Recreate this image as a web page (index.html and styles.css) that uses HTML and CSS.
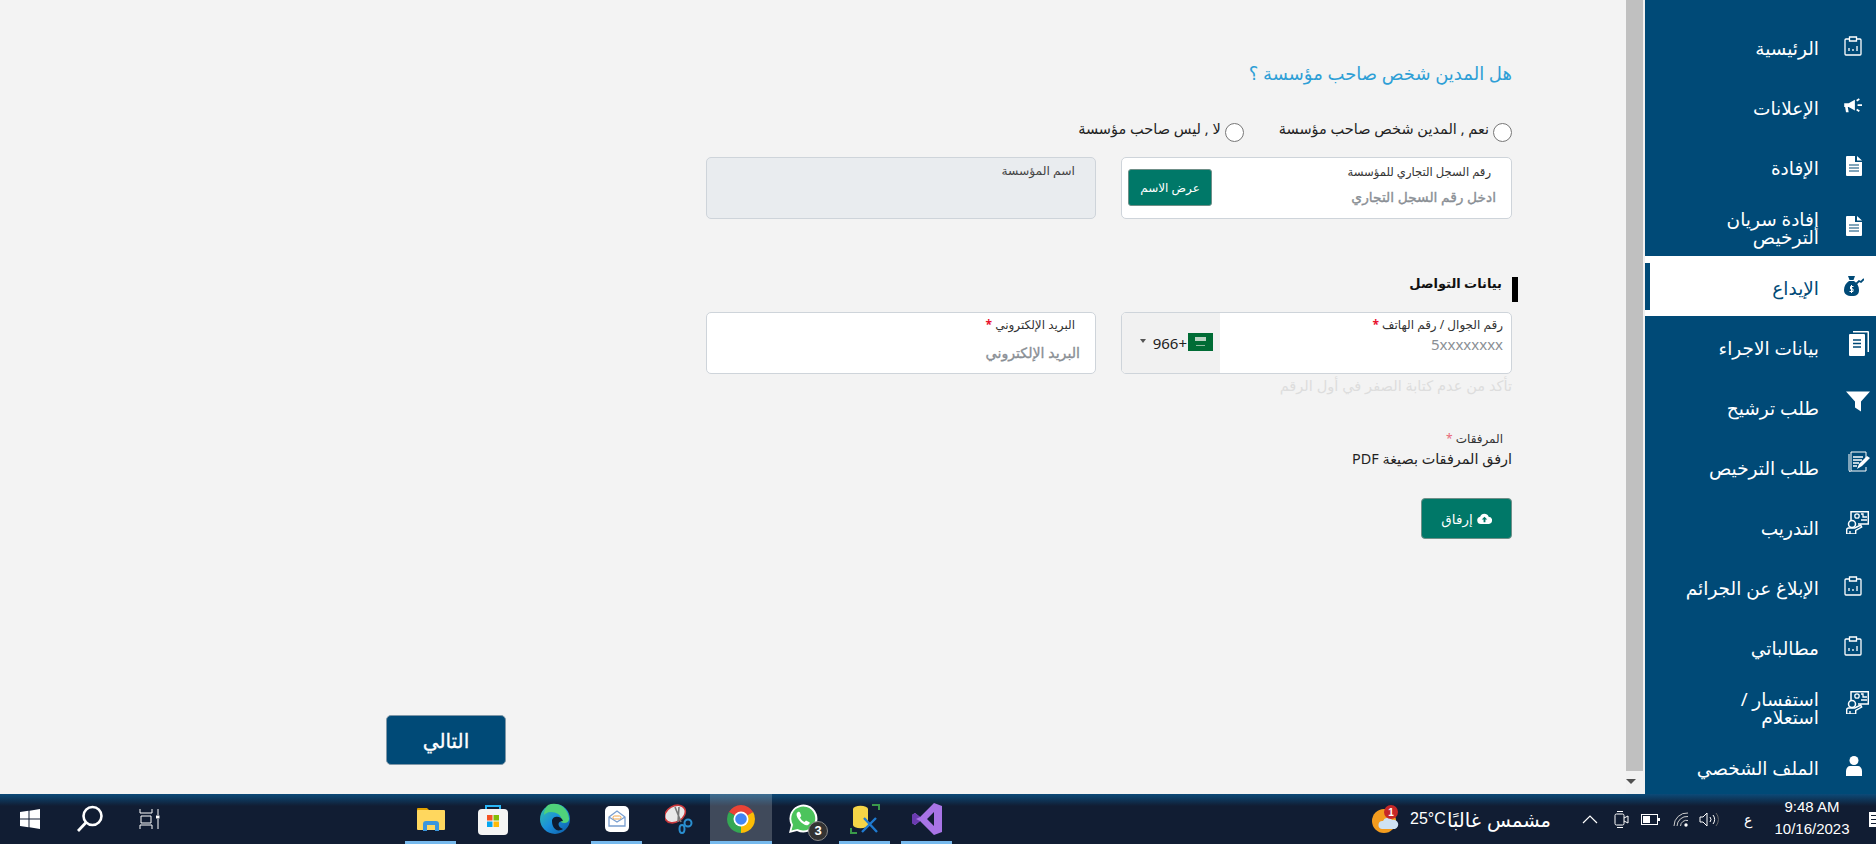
FILE: index.html
```html
<!DOCTYPE html>
<html lang="ar" dir="rtl">
<head>
<meta charset="utf-8">
<title>الإيداع</title>
<link rel="stylesheet" href="styles.css">
</head>
<body>
<svg class="defs" width="0" height="0" aria-hidden="true">
  <symbol id="i-clip" viewBox="0 0 18 20"><path d="M5.5 3H2a1 1 0 0 0-1 1v14a1 1 0 0 0 1 1h14a1 1 0 0 0 1-1V4a1 1 0 0 0-1-1h-3.500M5.500 1h7v4h-7z" fill="none" stroke="currentColor" stroke-width="1.300"/><path d="M5 15v-3M9 15v-2M13 15v-5" stroke="currentColor" stroke-width="1.300"/></symbol>
  <symbol id="i-horn" viewBox="0 0 22 18"><path d="M0 6h5l7-4v12l-7-4H4l1 6H2l-1-6H0z" fill="currentColor"/><path d="M14 3l3-2M15 8h5M14 13l3 2" stroke="currentColor" stroke-width="2" fill="none"/></symbol>
  <symbol id="i-file" viewBox="0 0 16 20"><path d="M0 1a1 1 0 0 1 1-1h8v6h7v13a1 1 0 0 1-1 1H1a1 1 0 0 1-1-1zM11 0l5 4.500h-5z" fill="currentColor"/><path d="M3 9h10M3 12h10M3 15h10" stroke="#004a77" stroke-width="1.200"/></symbol>
  <symbol id="i-docs" viewBox="0 0 20 25"><path d="M4 0h15a1 1 0 0 1 1 1v20h-1.500V1.500H4z" fill="currentColor"/><path d="M1 3h14a1 1 0 0 1 1 1v20a1 1 0 0 1-1 1H1a1 1 0 0 1-1-1V4a1 1 0 0 1 1-1z" fill="currentColor"/><path d="M4 9h8M4 12.500h8M4 16h8" stroke="#004a77" stroke-width="1.500"/></symbol>
  <symbol id="i-filter" viewBox="0 0 24 20"><path d="M0 0h24l-9 10v10l-6-4v-6z" fill="currentColor"/></symbol>
  <symbol id="i-pen" viewBox="0 0 22 21"><path d="M3 1h15v6M3 1v19h15v-4M1 3v16a2 2 0 0 0 2 2" fill="none" stroke="currentColor" stroke-width="1"/><path d="M5 6h10M5 9h9M5 12h6M5 15h4" stroke="currentColor" stroke-width="1.500"/><path d="M9 18l2-5 8-8 3 2-8 8z" fill="currentColor"/></symbol>
  <symbol id="i-teach" viewBox="0 0 23 23"><path d="M5 9V.7h17.300v12.300H12" fill="none" stroke="currentColor" stroke-width="1.500"/><circle cx="11" cy="5" r="2.200" fill="none" stroke="currentColor" stroke-width="1.300"/><path d="M15 3h2v3h4M15 9h6" stroke="currentColor" stroke-width="1.300" fill="none"/><circle cx="6" cy="13" r="3.500" fill="none" stroke="currentColor" stroke-width="1.500"/><path d="M.7 23v-4c0-1 1-2 2-2h6l6-3 1 2-6 3.500V23zM4 23v-3" fill="none" stroke="currentColor" stroke-width="1.400"/></symbol>
  <symbol id="i-user" viewBox="0 0 16 20"><circle cx="8" cy="4.500" r="4.500" fill="currentColor"/><path d="M0 20v-5c0-3 2-5 4-5h8c2 0 4 2 4 5v5z" fill="currentColor"/></symbol>
</svg>

<div class="screen">
  <aside class="sidebar">
    <a class="nav-item"><svg class="nav-icon ic-clip"><use href="#i-clip"/></svg><span class="nav-text">الرئيسية</span></a>
    <a class="nav-item"><svg class="nav-icon ic-horn"><use href="#i-horn"/></svg><span class="nav-text">الإعلانات</span></a>
    <a class="nav-item"><svg class="nav-icon ic-file"><use href="#i-file"/></svg><span class="nav-text">الإفادة</span></a>
    <a class="nav-item"><svg class="nav-icon ic-file"><use href="#i-file"/></svg><span class="nav-text">إفادة سريان الترخيص</span></a>
    <a class="nav-item is-active"><svg class="nav-icon ic-bag" viewBox="0 0 20 20"><path d="M4 0h7l-1.500 4h-4zM5 5h5c3 2 5 5 5 9 0 4-2 6-7 6s-8-2-8-6c0-4 2-7 5-9z" fill="currentColor"/><path d="M12 8l3-3 2 1 3-3" stroke="currentColor" stroke-width="1.800" fill="none"/><path d="M9.500 10.500H6.500v2.500h2.500v2.500H5.500M7.500 9v8" stroke="#fff" stroke-width="1" fill="none"/></svg><span class="nav-text">الإيداع</span></a>
    <a class="nav-item"><svg class="nav-icon ic-docs"><use href="#i-docs"/></svg><span class="nav-text">بيانات الاجراء</span></a>
    <a class="nav-item"><svg class="nav-icon ic-filter"><use href="#i-filter"/></svg><span class="nav-text">طلب ترشيح</span></a>
    <a class="nav-item"><svg class="nav-icon ic-pen"><use href="#i-pen"/></svg><span class="nav-text">طلب الترخيص</span></a>
    <a class="nav-item"><svg class="nav-icon ic-teach"><use href="#i-teach"/></svg><span class="nav-text">التدريب</span></a>
    <a class="nav-item"><svg class="nav-icon ic-clip"><use href="#i-clip"/></svg><span class="nav-text">الإبلاغ عن الجرائم</span></a>
    <a class="nav-item"><svg class="nav-icon ic-clip"><use href="#i-clip"/></svg><span class="nav-text">مطالباتي</span></a>
    <a class="nav-item"><svg class="nav-icon ic-teach"><use href="#i-teach"/></svg><span class="nav-text">استفسار / استعلام</span></a>
    <a class="nav-item"><svg class="nav-icon ic-user"><use href="#i-user"/></svg><span class="nav-text">الملف الشخصي</span></a>
  </aside>

  <div class="scrollbar">
    <div class="thumb"></div>
    <div class="arrow-down"></div>
  </div>

  <main class="main">
    <form class="form">
      <h2 class="question">هل المدين شخص صاحب مؤسسة ؟</h2>
      <div class="radios">
        <label class="radio"><input type="radio" name="owner"><span>نعم , المدين شخص صاحب مؤسسة</span></label>
        <label class="radio"><input type="radio" name="owner"><span>لا , ليس صاحب مؤسسة</span></label>
      </div>
      <div class="grid">
        <div class="box box-reg">
          <div class="stack stack-reg">
            <span class="lbl lbl-reg">رقم السجل التجاري للمؤسسة</span>
            <span class="ph ph-reg">ادخل رقم السجل التجاري</span>
          </div>
          <button type="button" class="btn-show">عرض الاسم</button>
        </div>
        <div class="box box-disabled"><span class="lbl lbl-name">اسم المؤسسة</span></div>
      </div>

      <h3 class="section"><span>بيانات التواصل</span></h3>

      <div class="grid grid-contact">
        <div class="box box-phone">
          <div class="stack stack-phone">
            <span class="lbl">رقم الجوال / رقم الهاتف <em class="req">*</em></span>
            <span class="ph ph-phone">5xxxxxxxx</span>
          </div>
          <div class="dial">
            <svg class="flag" viewBox="0 0 25 18"><rect width="25" height="18" fill="#006c35"/><rect x="7" y="4" width="11" height="4" fill="#b9d3c2"/><rect x="8" y="12" width="9" height="1" fill="#8fb9a0"/></svg>
            <span class="dial-code">966+</span>
            <span class="dial-caret"></span>
          </div>
        </div>
        <div class="box box-email">
          <span class="lbl lbl-email">البريد الإلكتروني <em class="req">*</em></span>
          <span class="ph ph-email">البريد الإلكتروني</span>
        </div>
      </div>
      <p class="hint">تأكد من عدم كتابة الصفر في أول الرقم</p>

      <div class="attach">
        <span class="lbl lbl-attach">المرفقات <em class="req req-soft">*</em></span>
        <p class="attach-note">ارفق المرفقات بصيغة PDF</p>
        <button type="button" class="btn-attach">
          <svg class="cloud" viewBox="0 0 16 12"><path d="M4 12a4 4 0 0 1-.8-7.900A5 5 0 0 1 12.500 4 4 4 0 0 1 12 12z" fill="#fff"/><path d="M8 4l-3 3.200h2V10h2V7.200h2z" fill="#007868"/></svg>
          <span>إرفاق</span>
        </button>
      </div>
    </form>
    <div class="footer"><button type="button" class="btn-next">التالي</button></div>
  </main>
</div>

<footer class="taskbar" dir="ltr">
  <div class="tb-left">
    <div class="tb-sys"><svg width="20" height="20" viewBox="0 0 20 20"><path d="M0 3l8.500-1.200V9.500H0zM9.500 1.700L20 0v9.500H9.500zM0 10.500h8.500v7.700L0 17zM9.500 10.500H20V20L9.500 18.300z" fill="#fff"/></svg></div>
    <div class="tb-sys"><svg width="28" height="28" viewBox="0 0 28 28"><circle cx="16.500" cy="11" r="9" fill="none" stroke="#fff" stroke-width="2.600"/><path d="M10 17.500L2 26" stroke="#fff" stroke-width="2.800"/></svg></div>
    <div class="tb-sys"><svg width="22" height="20" viewBox="0 0 22 20"><path d="M1 0v4h12V0M1 20v-4h12v4M2 7h10v7H2zM19 0v6M19 10v10" fill="none" stroke="#fff" stroke-width="1"/><rect x="17" y="6.500" width="3.500" height="3" fill="#fff"/></svg></div>
  </div>
  <div class="tb-apps">
    <div class="app is-open"><svg width="28" height="24" viewBox="0 0 28 24"><path d="M0 2a1 1 0 0 1 1-1h9l3 3H0z" fill="#e0a100"/><rect y="3" width="28" height="20" rx="1" fill="#ffd75e"/><path d="M6 24v-7a3 3 0 0 1 3-3h10a3 3 0 0 1 3 3v7h-4v-6h-8v6z" fill="#3a96dd"/></svg></div>
    <div class="app"><svg width="30" height="31" viewBox="0 0 30 31"><path d="M8 6V2h14v4" fill="none" stroke="#29b6f6" stroke-width="2"/><rect y="5" width="30" height="26" rx="4" fill="#f4f4f4"/><rect x="9" y="11" width="5.500" height="5.500" fill="#f35325"/><rect x="15.500" y="11" width="5.500" height="5.500" fill="#81bc06"/><rect x="9" y="17.500" width="5.500" height="5.500" fill="#05a6f0"/><rect x="15.500" y="17.500" width="5.500" height="5.500" fill="#ffba08"/></svg></div>
    <div class="app"><svg width="30" height="32" viewBox="0 0 30 32"><defs><linearGradient id="edge" x1="0" y1="0" x2="1" y2="1"><stop offset="0" stop-color="#34c6a0"/><stop offset=".5" stop-color="#1a8fdc"/><stop offset="1" stop-color="#0c59a4"/></linearGradient></defs><circle cx="15" cy="16" r="15" fill="url(#edge)"/><path d="M8 2c10-4 20 3 21 13 1 5-5 6-8 4 2-6-4-10-10-10-4 0-6 2-7 3 0-5 2-8 4-10z" fill="#4fd27b"/><path d="M12 18c0-5 9-6 11 0-6 0-6 6 0 8-6 4-11-1-11-8z" fill="#0e1b30"/></svg></div>
    <div class="app is-open"><svg width="24" height="26" viewBox="0 0 24 26"><rect width="24" height="26" rx="5" fill="#fff"/><path d="M4 11l8-6 8 6v9H4zM4 11l8 5 8-5" fill="none" stroke="#7a9fd0" stroke-width="1.300"/><rect x="8" y="10" width="8" height="3" rx="1.500" fill="none" stroke="#f0a54a"/></svg></div>
    <div class="app"><svg width="28" height="30" viewBox="0 0 28 30"><ellipse cx="10" cy="10" rx="11" ry="8" transform="rotate(-30 10 10)" fill="#e8e8e8" stroke="#c9363a" stroke-width="1.600"/><path d="M10 3l6 15M14 3l-1 15" stroke="#777" stroke-width="1.600"/><circle cx="23" cy="19" r="3.500" fill="none" stroke="#2a8fd0" stroke-width="2"/><ellipse cx="17" cy="25" rx="2.500" ry="4" fill="none" stroke="#2a8fd0" stroke-width="2"/></svg></div>
    <div class="app is-active"><svg width="30" height="30" viewBox="0 0 30 30"><path d="M15 15L2.900 8A14 14 0 0 1 27.100 8z" fill="#ea4335"/><path d="M15 15L27.100 8A14 14 0 0 1 15 29z" fill="#fbbc05"/><path d="M15 15L15 29A14 14 0 0 1 2.900 8z" fill="#34a853"/><circle cx="15" cy="15" r="7.500" fill="#fff"/><circle cx="15" cy="15" r="5.800" fill="#4285f4"/></svg></div>
    <div class="app app-wa"><svg width="30" height="30" viewBox="0 0 30 30"><path d="M1 29l2-8A14 14 0 1 1 9 27z" fill="#fff"/><path d="M3.500 26.500l1.500-5.800A12 12 0 1 1 9.500 25z" fill="#4cc45c"/><path d="M10 8c-2 1-2 4 1 8s7 6 9 5 2-3 1-3l-3-1.500-1.500 1.500c-2-1-3.500-2.500-4.500-4.500l1.300-1.500L12 8.500c-.5-.8-1.300-.8-2-.5z" fill="#fff"/></svg><span class="wa-badge">3</span></div>
    <div class="app is-open"><svg width="30" height="30" viewBox="0 0 30 30"><path d="M3 5a7 3 0 0 1 15 0v16a7 3 0 0 1-15 0z" fill="#f5d547"/><path d="M22 1h7v5M1 24v5h6" fill="none" stroke="#3a9a4a" stroke-width="2"/><path d="M12 28l14-14M14 14l13 14" stroke="#1f7ad0" stroke-width="2.400"/></svg></div>
    <div class="app is-open"><svg width="30" height="32" viewBox="0 0 30 32"><path d="M22 0l8 3v26l-8 3L8 18l-5 4-3-2V12l3-2 5 4zM22 9l-7 7 7 7z" fill="#a874e6" fill-rule="evenodd"/><path d="M8 14l-5-4-3 2v8l3 2 5-4-4-2z" fill="#6a3bb0"/></svg></div>
  </div>
  <div class="tb-right">
    <svg class="weather" viewBox="0 0 28 28"><circle cx="12" cy="16" r="12" fill="#f39c1f"/><path d="M10 24a4 4 0 0 1 1-8 5 5 0 0 1 9-1 4.500 4.500 0 0 1 3 9z" fill="#cfe2f3"/><circle cx="19" cy="7" r="7" fill="#c62828"/><text x="19" y="10.500" font-size="10" font-weight="700" fill="#fff" text-anchor="middle" font-family="Liberation Sans, sans-serif">1</text></svg>
    <span class="temp">25°C</span>
    <span class="weather-text" dir="rtl">مشمس غالبًا</span>
    <svg class="tray-chev" width="16" height="9" viewBox="0 0 16 9"><path d="M1 8l7-7 7 7" fill="none" stroke="#fff" stroke-width="1.200"/></svg>
    <svg class="tray-meet" width="15" height="19" viewBox="0 0 15 19"><rect x="1" y="4" width="9" height="11" rx="1.500" fill="none" stroke="#fff"/><path d="M10 8l4-2v7l-4-2M3 1.500h6M3 17.500h6" fill="none" stroke="#fff"/></svg>
    <svg class="tray-batt" width="19" height="11" viewBox="0 0 19 11"><rect x=".5" y=".5" width="16" height="10" fill="none" stroke="#fff"/><rect x="2" y="2" width="7" height="7" fill="#fff"/><rect x="17" y="4" width="2" height="3" fill="#fff"/></svg>
    <svg class="tray-wifi" width="16" height="15" viewBox="0 0 16 15"><path d="M1 14A13 13 0 0 1 15 1M4 14A10 10 0 0 1 15 4.500M7.500 14A6 6 0 0 1 15 8.500" fill="none" stroke="#ccc" stroke-width="1"/><circle cx="13" cy="13" r="1.700" fill="#fff"/></svg>
    <svg class="tray-vol" width="20" height="15" viewBox="0 0 20 15"><path d="M1 5h3l4-4v13l-4-4H1z" fill="none" stroke="#fff"/><path d="M11 5a4 4 0 0 1 0 5M14 3a7 7 0 0 1 0 9" fill="none" stroke="#fff"/><path d="M17 1a10 10 0 0 1 0 13" fill="none" stroke="#666"/></svg>
    <span class="lang">ع</span>
    <div class="clock"><span>9:48 AM</span><span>10/16/2023</span></div>
    <div class="notify"><i></i><i></i><i></i></div>
  </div>
</footer>
</body>
</html>
```

FILE: styles.css
```css
* { box-sizing: border-box; }
html, body { margin: 0; padding: 0; height: 844px; overflow: hidden; }
body {
  width: 1876px;
  font-family: "Noto Sans", "DejaVu Sans", sans-serif;
  background: #f3f3f3;
  color: #222;
  display: flex;
  flex-direction: column;
}
.defs { position: absolute; }
.screen { display: flex; height: 794px; flex: none; overflow: hidden; }

/* sidebar */
.sidebar {
  width: 231px;
  flex: none;
  background: #004a77;
  padding-top: 16px;
  overflow: hidden;
  color: #fff;
}
.nav-item {
  position: relative;
  display: flex;
  align-items: center;
  height: 60px;
  padding-right: 14px;
  color: #fff;
}
.nav-item.is-active { background: #fff; color: #004a77; }
.nav-item.is-active::before {
  content: "";
  position: absolute;
  left: 0;
  top: 7px;
  width: 5px;
  height: 47px;
  background: #004a77;
}
.nav-icon { flex: none; width: 18px; height: 20px; }
.ic-horn { width: 20px; height: 16px; margin-right: -2px; }
.ic-file { width: 16px; height: 20px; margin-left: 2px; }
.ic-bag { width: 20px; height: 20px; margin-right: -2px; }
.ic-docs { width: 20px; height: 25px; margin-right: -7px; margin-left: 5px; margin-top: -6px; }
.ic-filter { width: 24px; height: 21px; margin-right: -8px; margin-left: 2px; margin-top: -9px; }
.ic-pen { width: 22px; height: 21px; margin-right: -8px; margin-left: 4px; margin-top: -10px; }
.ic-teach { width: 23px; height: 23px; margin-right: -7px; margin-left: 2px; margin-top: -8px; }
.ic-user { width: 16px; height: 20px; margin-left: 2px; }
.nav-text {
  margin-right: 25px;
  font-size: 18.500px;
  line-height: 18px;
  width: 135px;
  padding-top: 4px;
}

/* scrollbar */
.scrollbar {
  width: 19px;
  flex: none;
  background: #f1f1f1;
  display: flex;
  flex-direction: column;
  align-items: flex-end;
}
.thumb { width: 17px; height: 771px; background: #c0c0c0; flex: none; }
.arrow-down {
  width: 0;
  height: 0;
  margin: 8px 3px 0 0;
  border-left: 5px solid transparent;
  border-right: 5px solid transparent;
  border-top: 5px solid #505050;
}

/* main */
.main { flex: 1; min-width: 0; display: flex; flex-direction: column; padding: 0 114px 0 0; }
.form { width: 806px; }
.question {
  margin: 59px 0 0;
  font-size: 18px;
  line-height: 28px;
  font-weight: 400;
  color: #2e9fd6;
}
.radios { display: flex; gap: 35px; margin-top: 31px; height: 24px; align-items: center; }
.radio { display: flex; align-items: center; gap: 4px; font-size: 14.500px; color: #222; }
.radio input { width: 19px; height: 19px; margin: 4px 0 0; flex: none; }
.radio span { line-height: 19px; margin-top: -4px; }

.grid { display: grid; grid-template-columns: 391px 390px; gap: 25px; margin-top: 15px; }
.box {
  position: relative;
  height: 62px;
  background: #fff;
  border: 1px solid #ced4da;
  border-radius: 5px;
}
.box-reg { display: flex; justify-content: space-between; align-items: center; padding: 0 20px 0 6px; }
.box-disabled { background: #e9ecef; padding: 5px 20px 0 0; }
.stack { display: flex; flex-direction: column; }
.stack-reg { margin-top: -5px; }
.lbl { font-size: 12px; line-height: 16px; color: #333; }
.lbl-reg { font-size: 11.600px; }
.lbl-name { display: block; color: #444; font-size: 12.300px; }
.ph { font-size: 14px; color: #8a8f95; font-weight: 400; -webkit-text-stroke: .35px #8a8f95; }
.ph-reg { line-height: 20px; margin-top: 7px; margin-right: -5px; font-size: 13.800px; }
.btn-show {
  width: 84px;
  height: 37px;
  margin-top: -1px;
  padding: 0;
  background: #007868;
  border: 1px solid #6f8f88;
  border-radius: 3px;
  color: #fff;
  font: 12px "Noto Sans", "DejaVu Sans", sans-serif;
}

.section { margin: 55px -6px 0 0; height: 25px; font-size: 13px; font-weight: 700; }
.section span { display: inline-block; border-right: 6px solid #000; padding-right: 10px; color: #111; height: 25px; line-height: 12px; }
.grid-contact { margin-top: 13px; }
.box-phone { display: flex; justify-content: space-between; overflow: hidden; }
.stack-phone { padding: 4px 8px 0 0; }
.ph-phone { direction: ltr; font-size: 15px; line-height: 18px; margin-top: 2px; text-align: right; -webkit-text-stroke: 0; }
.req { color: #e8112d; font-style: normal; font-weight: 700; }
.req-soft { color: #e8697a; font-weight: 400; }
.dial {
  width: 98px;
  background: #f1f1f1;
  display: flex;
  align-items: center;
  padding: 0 7px 0 0;
  gap: 1px;
}
.flag { width: 25px; height: 18px; flex: none; margin-top: -2px; }
.dial-code { font-size: 15px; direction: ltr; color: #222; }
.dial-caret {
  width: 0; height: 0;
  margin-right: 6px;
  margin-top: -4px;
  border-left: 3px solid transparent;
  border-right: 3px solid transparent;
  border-top: 4px solid #555;
}
.box-email { padding: 4px 20px 0 0; display: flex; flex-direction: column; }
.ph-email { margin-top: 10px; margin-right: -5px; line-height: 20px; font-size: 14.200px; }

.hint { margin: 1px 0 0; font-size: 14.600px; line-height: 20px; color: #ddd; width: 391px; }
.attach { margin-top: 36px; }
.lbl-attach { display: block; margin-right: 9px; }
.attach-note { margin: 3px 0 0; font-size: 14.400px; line-height: 18px; color: #222; }
.btn-attach {
  display: flex;
  align-items: center;
  justify-content: center;
  gap: 4px;
  width: 91px;
  height: 41px;
  margin-top: 30px;
  padding: 0;
  background: #007868;
  border: 1px solid #6f8f88;
  border-radius: 4px;
  color: #fff;
  font: 13.500px "Noto Sans", "DejaVu Sans", sans-serif;
}
.cloud { width: 15px; height: 11px; flex: none; }
.footer { margin-top: auto; padding: 0 0 29px 386px; display: flex; justify-content: flex-end; }
.btn-next {
  width: 120px;
  height: 50px;
  background: #004a77;
  border: 1px solid #7f97a8;
  border-radius: 5px;
  color: #fff;
  font: 400 20px "Noto Sans", "DejaVu Sans", sans-serif;
  -webkit-text-stroke: .3px #fff;
}

/* taskbar */
.taskbar {
  height: 50px;
  flex: none;
  display: flex;
  align-items: stretch;
  background: linear-gradient(#0c4a78 0, #111d33 12px);
  color: #fff;
}
.tb-left { display: flex; width: 400px; flex: none; }
.tb-sys { width: 60px; display: flex; align-items: center; justify-content: center; }
.tb-apps { display: flex; width: 558px; flex: none; }
.app {
  position: relative;
  width: 62px;
  display: flex;
  align-items: center;
  justify-content: center;
}
.app.is-open::after, .app.is-active::after {
  content: "";
  position: absolute;
  left: 5px;
  right: 6px;
  bottom: 0;
  height: 3px;
  background: #76b9ed;
}
.app.is-active { background: rgba(255,255,255,.2); }
.app.is-active::after { left: 0; right: 0; }
.wa-badge {
  position: absolute;
  right: 6px;
  bottom: 3px;
  width: 20px;
  height: 20px;
  border-radius: 50%;
  background: #333;
  border: 1px solid #888;
  font: 700 13px/18px "Liberation Sans", sans-serif;
  text-align: center;
  color: #fff;
}
.tb-right { flex: 1; display: flex; align-items: center; min-width: 0; padding-left: 414px; }
.weather { width: 28px; height: 28px; flex: none; }
.temp { font: 16px "Liberation Sans", sans-serif; margin-left: 10px; width: 38px; flex: none; }
.weather-text { font-size: 19.500px; word-spacing: 1px; margin-left: 11px; width: 92px; white-space: nowrap; flex: none; }
.tray-chev { margin-left: 31px; flex: none; }
.tray-meet { margin-left: 16px; flex: none; }
.tray-batt { margin-left: 12px; flex: none; }
.tray-wifi { margin-left: 13px; flex: none; }
.tray-vol { margin-left: 10px; flex: none; }
.lang { margin-left: 25px; font-size: 14px; width: 14px; flex: none; }
.clock {
  margin-left: 11px;
  width: 86px;
  flex: none;
  display: flex;
  flex-direction: column;
  align-items: center;
  margin-top: -2px;
  font: 15px/22px "Liberation Sans", sans-serif;
}
.notify {
  width: 7px;
  height: 15px;
  margin-left: 14px;
  background: #fff;
  display: flex;
  flex-direction: column;
  justify-content: space-evenly;
  flex: none;
}
.notify i { display: block; height: 1px; background: #111d33; margin-left: 2px; }
```
